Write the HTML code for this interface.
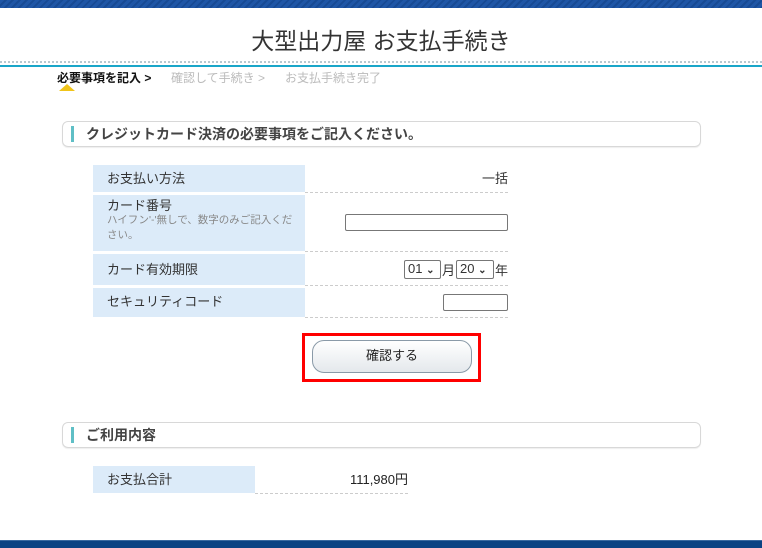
<!DOCTYPE html>
<html><head><meta charset="utf-8"><style>
*{margin:0;padding:0;box-sizing:border-box}
body{width:762px;height:548px;position:relative;background:#fff;font-family:"Liberation Sans","Noto Sans CJK JP",sans-serif;color:#333;overflow:hidden}
.a{position:absolute}
.topbar{left:0;top:0;width:762px;height:8px;background:repeating-linear-gradient(135deg,#1f56a6 0 3px,#174a94 3px 5px)}
.bot{left:0;top:540px;width:762px;height:8px;background:#0b4383;border-top:1px solid #3a6aa0}
.title{left:0;width:762px;top:22px;text-align:center;font-size:23px;color:#333}
.dots{left:0;top:61px;width:762px;height:2px;border-top:2px dotted #b8c8d0}
.cyan{left:0;top:65px;width:762px;height:2px;background:#1aa6c9}
.steps{top:69px;font-size:12px}
.sec{left:62px;width:639px;height:26px;border:1px solid #d8d8d8;border-radius:6px;box-shadow:0 1px 1px #eee}
.sec .bar{position:absolute;left:8px;top:4px;width:3px;height:16px;background:#5fbfc6}
.sec span{position:absolute;left:23px;top:2px;font-size:14px;font-weight:bold;color:#444}
.lab{background:#dcebf9;font-size:13px;padding:3px 0 0 14px;color:#333}
.val{border-bottom:1px dashed #ccc;font-size:13px;text-align:right}
.in{border:1px solid #777;border-radius:2px;height:17px;background:#fff}
.sel{border:1px solid #777;border-radius:2px;height:19px;background:#fff;font-size:13px;padding:0 0 0 3px}
</style></head><body>
<div class="a topbar"></div>
<div class="a title">大型出力屋 お支払手続き</div>
<div class="a dots"></div>
<div class="a cyan"></div>
<div class="a steps" style="left:57px;font-weight:bold;color:#111">必要事項を記入 &gt;</div>
<div class="a steps" style="left:171px;color:#bbb">確認して手続き &gt;</div>
<div class="a steps" style="left:285px;color:#bbb">お支払手続き完了</div>
<div class="a" style="left:59px;top:84px;width:0;height:0;border-left:8px solid transparent;border-right:8px solid transparent;border-bottom:7px solid #f0c419"></div>

<div class="a sec" style="top:121px"><div class="bar"></div><span>クレジットカード決済の必要事項をご記入ください。</span></div>

<div class="a lab" style="left:93px;top:165px;width:212px;height:27px">お支払い方法</div>
<div class="a val" style="left:305px;top:165px;width:203px;height:28px;padding-top:3px">一括</div>
<div class="a lab" style="left:93px;top:195px;width:212px;height:56px;padding-top:3px;line-height:15px;padding-right:10px">カード番号<br><span style="font-size:10.5px;color:#888;line-height:15px;display:block">ハイフン'-'無しで、数字のみご記入ください。</span></div>
<div class="a val" style="left:305px;top:195px;width:203px;height:57px"></div>
<div class="a in" style="left:345px;top:214px;width:163px"></div>
<div class="a lab" style="left:93px;top:254px;width:212px;height:31px;padding-top:5px">カード有効期限</div>
<div class="a val" style="left:305px;top:254px;width:203px;height:32px"></div>
<div class="a sel" style="left:404px;top:260px;width:37px">01 <b style="font-size:10px">⌄</b></div>
<div class="a" style="left:442px;top:260px;font-size:13px">月</div>
<div class="a sel" style="left:456px;top:260px;width:38px">20 <b style="font-size:10px">⌄</b></div>
<div class="a" style="left:495px;top:260px;font-size:13px">年</div>
<div class="a lab" style="left:93px;top:288px;width:212px;height:29px;padding-top:3px">セキュリティコード</div>
<div class="a val" style="left:305px;top:288px;width:203px;height:30px"></div>
<div class="a in" style="left:443px;top:294px;width:65px"></div>

<div class="a" style="left:302px;top:333px;width:179px;height:49px;border:3px solid #f00"></div>
<div class="a" style="left:312px;top:340px;width:160px;height:33px;border:1px solid #8a9aa8;border-radius:12px;background:linear-gradient(#fff,#e4e8ec);font-size:13px;text-align:center;line-height:29px;color:#222">確認する</div>

<div class="a sec" style="top:422px"><div class="bar"></div><span>ご利用内容</span></div>

<div class="a lab" style="left:93px;top:466px;width:162px;height:27px">お支払合計</div>
<div class="a val" style="left:255px;top:466px;width:153px;height:28px;padding-top:3px;color:#222">111,980円</div>

<div class="a bot"></div>
</body></html>
